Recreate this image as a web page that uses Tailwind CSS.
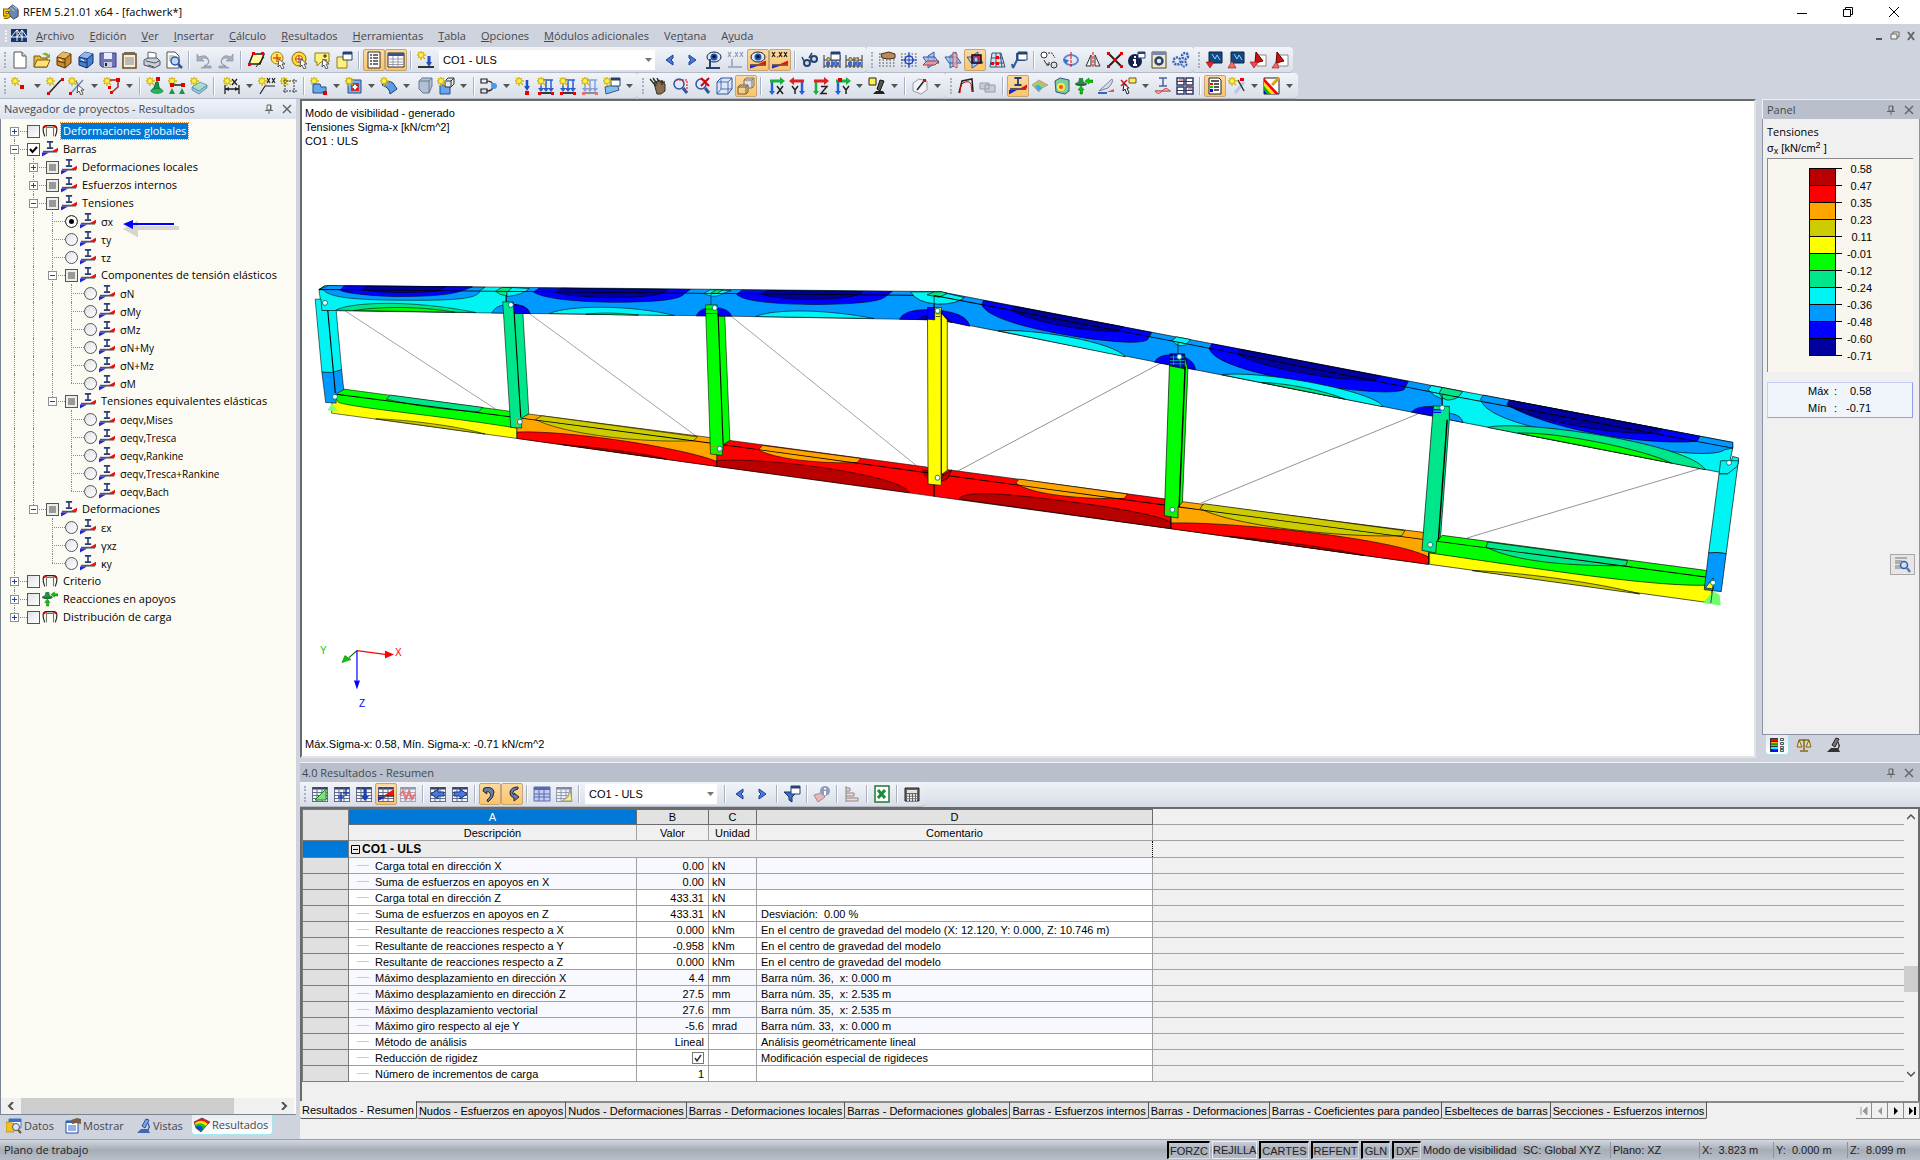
<!DOCTYPE html>
<html lang="es">
<head>
  <meta charset="UTF-8">
  <meta name="viewport" content="width=device-width, initial-scale=1.0">
  <title>RFEM 5.21.01 x64 - [fachwerk*]</title>
  <script src="https://cdn.jsdelivr.net/npm/@tailwindcss/browser@4"></script>
</head>
<body class="h-screen flex flex-col overflow-hidden bg-[#cfd3dd] font-['Open_Sans',sans-serif] text-[11px] leading-4 text-black">

  <!-- Title bar -->
  <header class="h-6 shrink-0 bg-white flex items-center justify-between">
    <div class="flex items-center gap-1 pl-[3px]">
      <svg class="w-4 h-4" viewBox="0 0 18 18"><path d="M6 5l5-4 6 5v8l-5 3-6-5z" fill="#6c86b0" stroke="#24344f"/><path d="M8 4l5 4M11 2l5 4" stroke="#c3d3ec"/><path d="M8 7H2v5h4q2 3-5 3" fill="none" stroke="#7a5a00" stroke-width="4"/><path d="M8 7H2v5h4q2 3-5 3" fill="none" stroke="#f5c400" stroke-width="2"/></svg>
      <h1>RFEM 5.21.01 x64 - [fachwerk*]</h1>
    </div>
    <div class="flex items-center gap-[34px] pr-5">
      <button aria-label="Minimizar"><svg class="w-3 h-3" viewBox="0 0 12 12"><path d="M1 7.500h10" stroke="#000"/></svg></button>
      <button aria-label="Restaurar"><svg class="w-3 h-3" viewBox="0 0 12 12"><path d="M1.500 3.500h7v7h-7zM3.500 3V1.500h7v7H9" fill="none" stroke="#000"/></svg></button>
      <button aria-label="Cerrar"><svg class="w-3 h-3" viewBox="0 0 12 12"><path d="M1 1l10 10M11 1L1 11" stroke="#000"/></svg></button>
    </div>
  </header>

  <!-- Menu -->
  <nav class="h-[23px] shrink-0 flex items-center justify-between text-[#44474f]">
    <div class="flex items-center gap-[15px] pl-[5px]">
      <span class="flex items-center gap-1">
        <span class="h-3 border-l-2 border-dotted border-[#f4f6fa]"></span>
        <svg class="w-4 h-4" viewBox="0 0 16 16"><path d="M0 1h16v13H0z" fill="#16376f"/><path d="M0 9h16M6 2v11M11 2v11M6 2L0 9M6 2l5 7M11 2L6 9M11 2l5 7" stroke="#fff" fill="none"/></svg>
      </span>
      <a href="#" class="-ml-1.5"><u>A</u>rchivo</a>
      <a href="#"><u>E</u>dición</a>
      <a href="#"><u>V</u>er</a>
      <a href="#"><u>I</u>nsertar</a>
      <a href="#"><u>C</u>álculo</a>
      <a href="#"><u>R</u>esultados</a>
      <a href="#"><u>H</u>erramientas</a>
      <a href="#"><u>T</u>abla</a>
      <a href="#"><u>O</u>pciones</a>
      <a href="#"><u>M</u>ódulos adicionales</a>
      <a href="#">Ve<u>n</u>tana</a>
      <a href="#">A<u>y</u>uda</a>
    </div>
    <div class="flex items-center gap-1.5 pr-1">
      <button aria-label="Minimizar documento"><svg class="w-2.5 h-2.5" viewBox="0 0 10 10"><path d="M2 8h6" stroke="#555" stroke-width="2"/></svg></button>
      <button aria-label="Restaurar documento"><svg class="w-2.5 h-2.5" viewBox="0 0 10 10"><path d="M3 3V1h6v5H7M1 3h6v5H1z" fill="#eee" stroke="#666"/></svg></button>
      <button aria-label="Cerrar documento"><svg class="w-2.5 h-2.5" viewBox="0 0 10 10"><path d="M2 1l6 8M8 1L2 9" stroke="#666" stroke-width="2"/></svg></button>
    </div>
  </nav>

  <!-- Toolbars -->
  <div id="toolbar1" class="h-[26px] shrink-0 flex"></div>
  <div id="toolbar2" class="h-[26px] shrink-0 flex"></div>

  <main class="flex-1 min-h-0 flex">

    <!-- Navigator -->
    <aside class="w-[296px] shrink-0 flex flex-col">
      <div class="h-5 shrink-0 flex items-center justify-between pl-1 pr-1 bg-linear-to-b from-[#f0f4fa] to-[#dbe1ec] text-[#44474f]">
        <h2>Navegador de proyectos - Resultados</h2>
        <span class="flex gap-2">
          <button aria-label="Fijar navegador"><svg class="w-2.5 h-2.5" viewBox="0 0 10 10"><path d="M3 1h4v5H3zM1 6.500h8M5 7v3M6.500 1v5" fill="none" stroke="#666"/></svg></button>
          <button aria-label="Cerrar navegador"><svg class="w-2.5 h-2.5" viewBox="0 0 10 10"><path d="M1 1l8 8M9 1L1 9" stroke="#666" stroke-width="1.500"/></svg></button>
        </span>
      </div>
      <div class="flex-1 min-h-0 relative flex flex-col bg-[#fcfbf3] border-l border-b border-[#7c8494] pt-[3px]">
        <ul id="tree"></ul>
        <svg class="absolute left-[122px] top-[99px] w-16 h-5" viewBox="0 0 64 20"><path d="M6 10h50M4 11l9-5v10z" stroke="#000" stroke-opacity=".15" stroke-width="4" fill="none"/><path d="M8 6h43" stroke="#0000ff" stroke-width="2"/><path d="M0 6l10-4v9z" fill="#0000ff"/></svg>
        <div class="mt-auto h-4 flex items-center bg-[#f0f0f0] mr-0.5">
          <button class="w-5 flex justify-center" aria-label="Desplazar a la izquierda"><svg class="w-2 h-2" viewBox="0 0 8 8"><path d="M6 0L2 4l4 4" fill="none" stroke="#505050" stroke-width="2"/></svg></button>
          <div class="flex-1 h-full flex"><div class="w-[84%] h-full bg-[#cdcdcd]"></div></div>
          <button class="w-5 flex justify-center" aria-label="Desplazar a la derecha"><svg class="w-2 h-2" viewBox="0 0 8 8"><path d="M2 0l4 4-4 4" fill="none" stroke="#505050" stroke-width="2"/></svg></button>
        </div>
      </div>
      <div class="h-6 shrink-0 flex items-start text-[#44474f]">
        <button class="flex items-center gap-0.5 h-[21px] pl-1.5 w-[59px]"><svg class="w-4 h-4 shrink-0" viewBox="0 0 16 16"><path d="M3 1h12v9H3z" fill="#fff" stroke="#3a6fd0"/><path d="M3 1h12v3H3z" fill="#3a6fd0"/><path d="M0 4h4l1 1h3v9H0z" fill="#f2c21a" stroke="#a07c00" stroke-width=".6"/><circle cx="10" cy="9" r="3.500" fill="#dbe9ff" stroke="#555"/><path d="M12 12l3 3" stroke="#7a4a20" stroke-width="2"/></svg>Datos</button>
        <button class="flex items-center gap-0.5 h-[21px] pl-1.5 w-[71px]"><svg class="w-4 h-4 shrink-0" viewBox="0 0 16 16"><path d="M1 3h12v12H1z" fill="#fff" stroke="#1d4ea8"/><path d="M1 3h12v2H1z" fill="#2b62c4"/><path d="M3 8h8M3 10h8M3 12h8" stroke="#2b62c4"/><path d="M6 2l6-2 4 1v5l-4-1-5 1z" fill="#7a5b45"/></svg>Mostrar</button>
        <button class="flex items-center gap-px h-[21px] pl-1.5 w-[61px]"><svg class="w-4 h-4 shrink-0" viewBox="0 0 16 16"><path d="M1 15h13l-2-4H5z" fill="#3f66b8"/><path d="M10 1l3 1-4 8-3-2zM12 5q3 4 0 7" fill="#7fa3e6" stroke="#274a96"/></svg>Vistas</button>
        <button class="flex items-center gap-0.5 h-5 pl-0.5 pr-1 bg-linear-to-b from-[#e8ecf2] to-white rounded-b border border-t-0 border-[#a9e6ee]"><svg class="w-4 h-4 shrink-0" viewBox="0 0 16 16"><path d="M0 5l8-4 8 4-4 4-5 6-5-4z" fill="#e11"/><path d="M1 6q7-5 13 1l-3 3-4 5-5-4z" fill="#fd0"/><path d="M1 8q6-4 11 1l-5 6-5-4z" fill="#1c1"/><path d="M2 10q4-3 7 1l-2 3-5-3z" fill="#14e"/><path d="M0 5l8-4 8 4-4 4-5 6-5-4z" fill="none" stroke="#333" stroke-width=".6"/></svg>Resultados</button>
      </div>
    </aside>

    <div class="flex-1 min-w-0 flex flex-col pl-1">
      <div class="flex-1 min-h-0 flex gap-1.5">

        <!-- Model view -->
        <section class="flex-1 min-w-0 relative overflow-hidden bg-white border-t-2 border-l-2 border-t-[#6b6b6b] border-l-[#6b6b6b] border-r-2 border-b-2 border-r-[#e3e3e3] border-b-[#e3e3e3] font-['Liberation_Sans',sans-serif]">
          <svg class="absolute inset-0 w-full h-full" viewBox="-1 0 1453 655" preserveAspectRatio="xMinYMin meet" stroke="#000" stroke-width=".7">
            <!-- left half -->
            <g transform="translate(-3 169) scale(.4209 .3333)" stroke-width="1.500">
              <g stroke="#777" stroke-width="1.800"><path d="M106 122L465 418M545 131L945 502M1025 139L1465 587"/></g>
              <!-- top chord -->
              <path d="M490 52L1508 65V150L980 138 490 130z" fill="#0099ff"/>
              <path d="M45 59L60 47 490 52V130L52 122z" fill="#00f4f4"/>
              <path d="M45 59L68 47 440 52 428 62C425 85 380 93 240 91 110 90 70 80 55 60z" fill="#0099ff"/>
              <path d="M95 61L105 48 410 51 385 63C350 78 290 80 230 80 160 78 110 70 95 61z" fill="#0000ff"/>
              <path d="M148 60L158 49 345 51 330 63C290 70 190 70 148 60z" fill="#0000a0"/>
              <path d="M85 121C120 97 260 88 418 128z" fill="#00e68a"/>
              <path d="M128 122C200 108 290 110 368 127z" fill="#00ff00"/>
              <path d="M465 64L480 53H510L495 66 490 78Q475 76 465 64z" fill="#00e68a"/>
              <path d="M492 78V66L505 53 545 56Q530 75 492 80z" fill="#00f4f4"/>
              <path d="M456 129Q465 108 487 105V130z" fill="#0099ff"/>
              <path d="M487 104Q540 98 547 131L487 130z" fill="#0000ff"/>
              <path d="M555 67L568 55 928 59 915 70C905 90 850 97 740 97 640 95 580 85 555 67z" fill="#0000ff"/>
              <path d="M608 67L622 55 874 59 862 70C830 83 760 83 720 83 660 80 625 75 608 67z" fill="#0000a0"/>
              <path d="M593 131C640 105 790 105 890 137z" fill="#00f4f4"/>
              <path d="M680 133C720 127 760 129 805 136z" fill="#00e68a"/>
              <path d="M960 71L975 60 1025 62Q1012 66 998 76 980 84 960 71z" fill="#00f4f4"/>
              <path d="M977 70L990 60H1005L992 71z" fill="#00e68a"/>
              <path d="M942 138Q950 112 985 112 1020 115 1026 139z" fill="#0000ff"/>
              <path d="M1038 73L1050 61 1408 65 1395 77C1385 95 1330 103 1220 104 1100 102 1050 90 1038 73z" fill="#0000ff"/>
              <path d="M1098 73L1112 62 1338 65 1325 76C1290 87 1240 88 1190 88 1140 85 1110 80 1098 73z" fill="#0000a0"/>
              <path d="M1083 140C1130 116 1250 118 1365 146z" fill="#00f4f4"/>
              <path d="M45 59L1508 77" stroke-width="2.600"/>
              <path d="M490 78V130M977 72V138M60 47L45 59"/>
              <!-- bottom chord -->
              <path d="M77 372L515 440 516 506 75 430z" fill="#ffff00"/>
              <path d="M180 447C260 450 380 470 440 493z" fill="#cccc00"/>
              <path d="M77 372L104 358 502 425 515 445V475C350 440 130 415 92 398z" fill="#00ff00"/>
              <path d="M215 376L435 413 425 425 400 424C330 418 260 405 205 388z" fill="#00e68a"/>
              <path d="M527 440L545 433 985 505 992 525 991 590 516 506V445z" fill="#ffa500"/>
              <path d="M516 487C620 480 900 530 991 575V590L516 506z" fill="#ff0000"/>
              <path d="M620 524C700 532 820 550 870 568z" fill="#c00000"/>
              <path d="M575 438L945 501 935 513C800 520 620 490 560 449z" fill="#cccc00"/>
              <path d="M991 525L1022 512 1490 592 1508 610V680L991 590z" fill="#ff0000"/>
              <path d="M991 573C1100 560 1430 615 1449 669L991 590z" fill="#b80000"/>
              <path d="M1100 527L1333 566 1325 578C1250 583 1130 570 1090 540z" fill="#ffa500"/>
              <path d="M1480 600Q1485 630 1508 635V608z" fill="#c00000"/>
              <path d="M77 372L525 445 1006 525 1508 612" fill="none" stroke-width="2.600"/>
              <!-- posts -->
              <path d="M36 88H50L52 122H86L99 300 75 310 52 307z" fill="#00f4f4"/>
              <path d="M52 307Q75 312 99 300L104 360 86 372V400L61 398z" fill="#0099ff"/>
              <path d="M66 122L84 370" stroke-width="2.600"/>
              <path d="M75 402L65 422 90 424z" fill="#80ff80" stroke="none"/>
              <path d="M482 96H506L510 131 530 131 544 432 527 445V475L501 473z" fill="#00e68a"/>
              <path d="M506 96L510 131 547 131Q540 106 506 104z" fill="#0000ff"/>
              <path d="M509 125L525 445" stroke-width="2.600"/>
              <path d="M515 445V470M527 450L515 474" stroke="#ffa500"/>
              <path d="M964 105H992L994 140H1010L1022 512 1006 525 1004 557 976 553z" fill="#00ff00"/>
              <path d="M994 130L1006 525" stroke-width="2.600"/>
              <path d="M964 118H992M964 131H992" stroke="#0000a0"/>
              <path d="M977 530H1004M977 540H1004M977 550H1004" stroke="#ff7000"/>
            </g>
            <!-- right half -->
            <g transform="translate(597 169) scale(.5485 .3333)" stroke-width="1.500">
              <g stroke="#777" stroke-width="1.800"><path d="M105 605L480 277M550 700L945 433M1035 805L1470 592"/></g>
              <!-- top chord -->
              <path d="M63 66H75L510 203 990 353V445L540 300 75 150H63z" fill="#0099ff"/>
              <path d="M990 353L1520 518V535L1510 612 1028 458 990 445z" fill="#00f4f4"/>
              <path d="M20 66H75L118 83Q105 103 70 103 30 98 20 66z" fill="#00f4f4"/>
              <path d="M50 75L63 66H78L87 71 72 82z" fill="#00e68a"/>
              <path d="M0 148Q8 120 50 119 122 123 128 169L75 150z" fill="#0000ff"/>
              <path d="M35 149Q45 132 63 133 88 135 95 158L75 150z" fill="#0000a0"/>
              <path d="M150 105L153 92 460 188 452 210C440 222 400 218 340 205 240 180 160 145 150 105z" fill="#0000ff"/>
              <path d="M205 122L210 110 408 171 398 184C340 187 240 155 205 122z" fill="#0000a0"/>
              <path d="M180 183C240 175 390 215 412 261z" fill="#00f4f4"/>
              <path d="M497 212L505 201 531 209 522 225Q508 235 497 212z" fill="#00f4f4"/>
              <path d="M465 277Q472 255 495 255L520 262Q538 275 540 300z" fill="#0000ff"/>
              <path d="M565 235L570 222 928 335 920 360C900 372 850 365 800 355 680 325 572 285 565 235z" fill="#0000ff"/>
              <path d="M615 252L622 239 877 319 868 331C800 335 660 295 615 252z" fill="#0000a0"/>
              <path d="M588 315C660 300 870 365 882 411z" fill="#00f4f4"/>
              <path d="M660 338C710 340 780 365 812 388z" fill="#00e68a"/>
              <path d="M964 360L970 347 990 353V388Q975 380 964 360z" fill="#00f4f4"/>
              <path d="M985 368L990 353 1027 365Q1020 390 1000 391 985 385 985 368z" fill="#00e68a"/>
              <path d="M934 427Q942 408 975 410L980 440z" fill="#0000ff"/>
              <path d="M1003 430Q1025 436 1028 458L1003 450z" fill="#0099ff"/>
              <path d="M1060 388L1065 376 1520 518V535L1505 540C1490 560 1420 550 1360 535 1230 500 1070 460 1060 388z" fill="#0099ff"/>
              <path d="M1108 405L1112 391 1460 500 1455 515C1350 528 1180 475 1108 405z" fill="#0000ff"/>
              <path d="M1110 405L1115 392 1390 478 1382 491C1300 495 1160 455 1110 405z" fill="#0000a0"/>
              <path d="M1073 473C1130 448 1440 520 1470 600z" fill="#00e68a"/>
              <path d="M1128 490C1200 485 1360 540 1408 580z" fill="#00ff00"/>
              <path d="M63 77L508 217 990 373 1520 535" fill="none" stroke-width="2.600"/>
              <path d="M63 77V150M508 217V255M990 373V410"/>
              <!-- bottom chord -->
              <path d="M63 610L88 600 486 688 495 710V777L63 680z" fill="#ff0000"/>
              <path d="M108 688C120 660 200 672 320 698 420 720 490 745 495 760V777z" fill="#b80000"/>
              <path d="M218 628L416 673 410 686C340 690 240 676 212 640z" fill="#ffa500"/>
              <path d="M495 700L516 696 955 788 965 805V884L495 777z" fill="#ffa500"/>
              <path d="M495 760C600 755 900 805 965 862V884L495 777z" fill="#ff0000"/>
              <path d="M600 800C680 810 800 838 850 858z" fill="#c00000"/>
              <path d="M555 702L922 783 916 798C800 805 600 765 548 716z" fill="#cccc00"/>
              <path d="M967 825L1484 925 1480 1000 967 884z" fill="#ffff00"/>
              <path d="M1045 903C1120 905 1280 940 1350 973z" fill="#cccc00"/>
              <path d="M980 815L990 797 1470 902 1484 925 1470 947C1350 950 1100 880 967 850z" fill="#00ff00"/>
              <path d="M1073 817L1328 873 1325 888C1220 890 1120 875 1070 832z" fill="#00e68a"/>
              <path d="M63 612L510 712 982 815 1484 925" fill="none" stroke-width="2.600"/>
              <path d="M80 615L95 601 88 625Q80 635 75 634z" fill="#c00000"/>
              <path d="M63 645V680M495 745V777M965 850V884"/>
              <!-- posts -->
              <path d="M51 148L64 113H76V130L87 150V602L76 615V647L52 643z" fill="#ffff00"/>
              <path d="M51 113H64V150L51 148z" fill="#0000ff"/>
              <path d="M76 125V615" stroke-width="2"/>
              <path d="M66 125h8M66 132h8M66 140h8"/>
              <path d="M493 255L520 258 526 297 516 697 508 712V745L483 738z" fill="#00ff00"/>
              <path d="M493 252H520V297L493 288z" fill="#0000c0"/>
              <path d="M493 262H520M493 272H520M493 282H520M500 255v30M512 262v30" stroke="#00e68a"/>
              <path d="M521 290L510 712" stroke-width="2.600"/>
              <path d="M485 722h22M485 732h22" stroke="#ff7000"/>
              <path d="M974 408L1003 410V450L987 800 980 815 978 850 953 842z" fill="#00e68a"/>
              <path d="M974 420h14M974 428h14" stroke="#0000ff" stroke-width="4"/>
              <path d="M999 450L983 812" stroke-width="2.600"/>
              <path d="M958 825h15M958 833h15" stroke="#00ff00"/>
              <path d="M1520 560L1531 565 1508 852Q1490 846 1476 850L1495 612 1510 612z" fill="#00f4f4"/>
              <path d="M1498 573H1531L1528 590 1511 612H1495z" fill="#00f4f4"/>
              <path d="M1476 850Q1490 846 1508 852L1499 966 1468 960z" fill="#0099ff"/>
              <path d="M1470 955L1484 925V958z" fill="#ffff00"/>
              <path d="M1484 965L1466 1000 1498 1008 1496 975z" fill="#6dff6d" stroke="none"/>
              <path d="M1484 950L1480 1000"/>
            </g>
            <g fill="#fff" stroke="#088" stroke-width="1">
              <circle cx="22" cy="202" r="2.500"/><circle cx="208" cy="204" r="2.500"/><circle cx="412" cy="207" r="2.500"/><circle cx="635" cy="210" r="2.500"/>
              <circle cx="32" cy="296" r="2.500"/><circle cx="217" cy="321" r="2.500"/><circle cx="417" cy="348" r="2.500"/><circle cx="635" cy="377" r="2.500"/>
              <circle cx="877" cy="256" r="2.500"/><circle cx="1140" cy="307" r="2.500"/><circle cx="1427" cy="362" r="2.500"/>
              <circle cx="870" cy="409" r="2.500"/><circle cx="1128" cy="444" r="2.500"/><circle cx="1411" cy="482" r="2.500"/>
            </g>
            <!-- axes -->
            <g stroke-width="1.200" font-size="10">
              <path d="M54 550L84 554" stroke="#f00"/><path d="M82 550l9 4-9 4z" fill="#f00" stroke="none"/>
              <path d="M54 550L46 557" stroke="#060"/><path d="M39 562l3-7 6 4z" fill="#0c0" stroke="#060" stroke-width=".5"/>
              <path d="M54 550V580" stroke="#00f"/><path d="M51 580h6l-3 9z" fill="#00f" stroke="none"/>
              <text x="17" y="553" fill="#0c0" stroke="none">Y</text>
              <text x="92" y="555" fill="#f00" stroke="none">X</text>
              <text x="56" y="606" fill="#00f" stroke="none">Z</text>
            </g>
          </svg>
          <div class="absolute left-[3px] top-[5px] leading-[14px]">
            <p>Modo de visibilidad - generado</p>
            <p>Tensiones Sigma-x [kN/cm^2]</p>
            <p>CO1 : ULS</p>
          </div>
          <p class="absolute left-[3px] bottom-[5px] leading-[14px]">Máx.Sigma-x: 0.58, Mín. Sigma-x: -0.71 kN/cm^2</p>
        </section>

        <!-- Colour panel -->
        <aside class="w-[158px] shrink-0 flex flex-col">
          <div class="h-5 shrink-0 flex items-center justify-between pl-1 pr-1.5 bg-[#b9c0cb] border-t border-l border-[#eef1f6] text-[#44474f]">
            <h2>Panel</h2>
            <span class="flex gap-2">
              <button aria-label="Fijar panel"><svg class="w-2.5 h-2.5" viewBox="0 0 10 10"><path d="M3 1h4v5H3zM1 6.500h8M5 7v3M6.500 1v5" fill="none" stroke="#666"/></svg></button>
              <button aria-label="Cerrar panel"><svg class="w-2.5 h-2.5" viewBox="0 0 10 10"><path d="M1 1l8 8M9 1L1 9" stroke="#666" stroke-width="1.500"/></svg></button>
            </span>
          </div>
          <div class="flex-1 min-h-0 bg-[#f0f0f0] border-x border-b border-[#8b93a3] pt-[5px] pl-1 pr-1.5 font-['Liberation_Sans',sans-serif]">
            <p class="font-['Open_Sans',sans-serif]">Tensiones</p>
            <p>σ<sub class="text-[9px]">x</sub> [kN/cm<sup class="text-[9px]">2</sup> ]</p>
            <div class="mt-0.5 h-[214px] bg-[#f9f6ef] border-t border-l border-[#8a8a8a] flex justify-center pt-0.5">
              <div class="w-[33px] pt-[7px]">
                <div id="legendColours" class="border border-b-0 border-black w-[27px]"></div>
              </div>
              <div id="legendValues" class="w-[30px] text-right"></div>
            </div>
            <div class="mt-2.5 h-9 bg-[#eff5fb] border border-[#c3cdf5] border-b-[#9a9ae0] border-r-[#9a9ae0] leading-[17px] pl-10">
              <p class="flex"><span class="w-[26px]">Máx</span><span class="w-4">:</span><span>0.58</span></p>
              <p class="flex"><span class="w-[26px]">Mín</span><span class="w-3">:</span><span>-0.71</span></p>
            </div>
            <div class="mt-[136px] flex justify-end -mr-0.5">
              <button class="w-[25px] h-[21px] bg-[#e6e6e6] border border-[#a8a8a8] flex items-center justify-center" aria-label="Detalles"><svg class="w-4 h-4" viewBox="0 0 16 16"><path d="M0 1h12M0 4h7M0 6h5M0 9h5M0 11h7" stroke="#777"/><circle cx="9" cy="8" r="3.500" fill="#cfe0ff" stroke="#335a9c" stroke-width="1.500"/><path d="M12 11l3 4" stroke="#5578c0" stroke-width="2.500"/></svg></button>
            </div>
          </div>
          <div class="h-[23px] shrink-0 flex items-start pl-[3px]">
            <button class="w-6 h-5 rounded-b border border-t-0 border-[#a9e6ee] bg-linear-to-b from-[#e4e8f0] to-white flex items-center justify-center" aria-label="Escala de colores"><svg class="w-4 h-4" viewBox="0 0 16 16"><path d="M1 1h8v14H1z" fill="#333"/><path d="M2 2h7v2H2z" fill="#f00"/><path d="M2 5h7v1.500H2z" fill="#fa0"/><path d="M2 7.500h7V9H2z" fill="#0f0"/><path d="M2 10h7v2H2z" fill="#0ff"/><path d="M2 13h7v1.500H2z" fill="#00f"/><path d="M11.500 1.500h3v2h-3zM11.500 5.500h3v2h-3zM11.500 9.500h3v2h-3zM11.500 12.500h3v2h-3z" fill="#ddd" stroke="#555"/></svg></button>
            <button class="w-[30px] h-5 flex items-center justify-center" aria-label="Factores"><svg class="w-4 h-4" viewBox="0 0 16 16"><path d="M8 2v11M3 3h10M4 14h8" stroke="#8a6a10" stroke-width="1.500"/><path d="M3 3L1 10h5zM13 3l-3 7h5z" fill="#f5e08a" stroke="#7c6420"/></svg></button>
            <button class="w-[30px] h-5 flex items-center justify-center" aria-label="Filtro"><svg class="w-4 h-4" viewBox="0 0 16 16"><path d="M1 15h13l-2-4H5z" fill="#333"/><path d="M10 1l3 1-4 8-3-2zM12 5q3 4 0 7" fill="#777" stroke="#222"/></svg></button>
          </div>
        </aside>
      </div>

      <!-- Results table -->
      <section class="shrink-0 mt-1 flex flex-col bg-[#f0f0f0]">
        <div class="h-5 flex items-center justify-between pl-0.5 pr-1.5 bg-[#b9c0cb] border-t border-[#eef1f6] text-[#44474f]">
          <h2>4.0 Resultados - Resumen</h2>
          <span class="flex gap-2">
            <button aria-label="Fijar tabla"><svg class="w-2.5 h-2.5" viewBox="0 0 10 10"><path d="M3 1h4v5H3zM1 6.500h8M5 7v3M6.500 1v5" fill="none" stroke="#666"/></svg></button>
            <button aria-label="Cerrar tabla"><svg class="w-2.5 h-2.5" viewBox="0 0 10 10"><path d="M1 1l8 8M9 1L1 9" stroke="#666" stroke-width="1.500"/></svg></button>
          </span>
        </div>
        <div id="toolbar3" class="h-[25px] flex bg-linear-to-b from-[#eef2f8] to-[#d5dbe6]"></div>
        <div class="flex border-t-2 border-x-2 border-[#6b6b6b] font-['Liberation_Sans',sans-serif] leading-[14px] pb-[19px]">
          <table class="flex-1 table-fixed border-collapse">
            <colgroup>
              <col class="w-[46px]"><col class="w-[288px]"><col class="w-[72px]"><col class="w-12"><col class="w-[396px]"><col>
            </colgroup>
            <thead>
              <tr class="h-[15px]">
                <th rowspan="2" class="border border-[#7a7a7a] bg-[#e2e2e2]"></th>
                <th class="border border-[#6b6b6b] p-0 font-normal bg-[#0078d7] text-white">A</th>
                <th class="border border-[#6b6b6b] p-0 font-normal bg-[#e2e2e2]">B</th>
                <th class="border border-[#6b6b6b] p-0 font-normal bg-[#e2e2e2]">C</th>
                <th class="border border-[#6b6b6b] p-0 font-normal bg-[#e2e2e2]">D</th>
                <td class="border-b border-[#a0a0a0]"></td>
              </tr>
              <tr class="h-4">
                <th class="border border-[#a0a0a0] p-0 font-normal">Descripción</th>
                <th class="border border-[#a0a0a0] p-0 font-normal">Valor</th>
                <th class="border border-[#a0a0a0] p-0 font-normal">Unidad</th>
                <th class="border border-[#a0a0a0] p-0 font-normal">Comentario</th>
                <td class="border-b border-[#a0a0a0]"></td>
              </tr>
              <tr class="h-[17px]">
                <td class="border border-[#7a7a7a] bg-[#0078d7]"></td>
                <th colspan="4" class="border border-dotted border-black p-0 bg-[#ececec] text-left font-bold text-[12px]">
                  <span class="flex items-center gap-0.5 pl-0.5"><svg class="w-[9px] h-[9px]" viewBox="0 0 9 9"><path d="M.5.5h8v8h-8zM2 4.500h5" fill="none" stroke="#000"/></svg>CO1 - ULS</span>
                </th>
                <td class="border-b border-[#a0a0a0]"></td>
              </tr>
            </thead>
            <tbody id="rows"></tbody>
          </table>
          <div class="w-3.5 shrink-0 flex flex-col items-center justify-between py-1">
            <button aria-label="Subir"><svg class="w-2 h-2" viewBox="0 0 8 8"><path d="M0 6l4-4 4 4" fill="none" stroke="#505050" stroke-width="1.500"/></svg></button>
            <div class="w-full flex-1 flex flex-col justify-end pb-[78px]"><div class="h-[26px] bg-[#cdcdcd]"></div></div>
            <button aria-label="Bajar"><svg class="w-2 h-2" viewBox="0 0 8 8"><path d="M0 2l4 4 4-4" fill="none" stroke="#505050" stroke-width="1.500"/></svg></button>
          </div>
        </div>
        <div class="h-[18px] flex font-['Liberation_Sans',sans-serif]">
          <div id="tabs" class="flex"></div>
          <div class="flex-1 flex justify-end border-t-2 border-[#8a8a8a]">
            <button class="w-4 h-4 bg-[#f0f0f0] border-r border-b border-[#8a8a8a] flex items-center justify-center" aria-label="Primera"><svg class="w-2 h-2" viewBox="0 0 8 8"><path d="M1 0v8M7 0L3 4l4 4z" fill="#999" stroke="#999"/></svg></button>
            <button class="w-4 h-4 bg-[#f0f0f0] border-r border-b border-[#8a8a8a] flex items-center justify-center" aria-label="Anterior"><svg class="w-2 h-2" viewBox="0 0 8 8"><path d="M6 0L2 4l4 4z" fill="#999"/></svg></button>
            <button class="w-4 h-4 bg-[#f0f0f0] border-r border-b border-[#8a8a8a] flex items-center justify-center" aria-label="Siguiente"><svg class="w-2 h-2" viewBox="0 0 8 8"><path d="M2 0l4 4-4 4z"/></svg></button>
            <button class="w-4 h-4 bg-[#f0f0f0] border-r border-b border-[#8a8a8a] flex items-center justify-center" aria-label="Última"><svg class="w-2 h-2" viewBox="0 0 8 8"><path d="M1 0l4 4-4 4zM6 0h2v8H6z"/></svg></button>
          </div>
        </div>
        <div class="h-5"></div>
      </section>
    </div>
  </main>

  <!-- Status bar -->
  <footer class="h-[21px] shrink-0 flex items-center justify-between bg-linear-to-b from-[#d3d7df] via-[#a6adb7] to-[#b9bfc8] border-t border-[#9a9fa8] pl-1 text-[#222] font-['Liberation_Sans',sans-serif]">
    <span class="font-['Open_Sans',sans-serif]">Plano de trabajo</span>
    <div class="flex items-center">
      <div class="flex gap-0.5 leading-3 mr-0.5">
        <button class="h-[18px] w-[43px] border-t-2 border-l-2 border-black border-r border-b border-r-[#d8dce2] border-b-[#d8dce2]">FORZC</button>
        <button class="h-[18px] w-[45px] border border-[#e8ebf0]">REJILLA</button>
        <button class="h-[18px] w-[50px] border-t-2 border-l-2 border-black border-r border-b border-r-[#d8dce2] border-b-[#d8dce2]">CARTES</button>
        <button class="h-[18px] w-[48px] border-t-2 border-l-2 border-black border-r border-b border-r-[#d8dce2] border-b-[#d8dce2]">REFENT</button>
        <button class="h-[18px] w-[29px] border-t-2 border-l-2 border-black border-r border-b border-r-[#d8dce2] border-b-[#d8dce2]">GLN</button>
        <button class="h-[18px] w-[29px] border-t-2 border-l-2 border-black border-r border-b border-r-[#d8dce2] border-b-[#d8dce2]">DXF</button>
      </div>
      <span class="w-[100px]">Modo de visibilidad</span>
      <span class="w-[87px]">SC: Global XYZ</span>
      <span class="w-[89px] border-l border-[#8d939d] pl-0.5">Plano: XZ</span>
      <span class="w-[74px] border-l border-[#8d939d] pl-0.5 whitespace-pre">X:  3.823 m</span>
      <span class="w-[74px] border-l border-[#8d939d] pl-0.5 whitespace-pre">Y:  0.000 m</span>
      <span class="w-[73px] border-l border-[#8d939d] pl-0.5 whitespace-pre">Z:  8.099 m</span>
    </div>
  </footer>

  <script>
    // shared icon parts, 18x18 grid
    const star = '<path d="M4 0v9M0 4h9M1 1l7 7M7 1L1 7" stroke="#d8b800" stroke-width="1.500"/><circle cx="4" cy="4" r="2.500" fill="#fff04a" stroke="#b89a00" stroke-width=".5"/>';
    const red = (x, y) => `<rect x="${x}" y="${y}" width="4" height="4" fill="#e00000"/>`;
    const cursor = '<path d="M10 8l6 5h-3l2 4-2 1-2-4-2 2z" fill="#fff" stroke="#333" stroke-width=".8"/>';
    const win = '<path d="M8 1h9v8H8z" fill="#fff" stroke="#26426f"/><path d="M8 1h9v2.500H8z" fill="#26426f"/>';
    const eye = '<ellipse cx="9" cy="6" rx="7" ry="5" fill="#dbe9ff" stroke="#123"/><circle cx="9" cy="6" r="3.500" fill="#2350a8"/><circle cx="9" cy="5.500" r="1.500" fill="#012"/>';
    const wedge = '<path d="M1 14h16" stroke="#444" stroke-width="1.500"/><path d="M1 17.500V14.500h9z" fill="#2222e0"/><path d="M17 13.500V9.500l-9 4z" fill="#e11"/>';
    const beads = '<path d="M1 4v13M17 4v13M1 9h16M1 15h16M5 6v11M9 6v11M13 6v11" stroke="#333"/><path d="M3 11h4v3H3zM8 11h4v3H8zM13 11h3v3h-3z" fill="#3f66c8"/><path d="M4 7h3v3H4zM10 7h3v3h-3z" fill="#f3d34a" stroke="#765"/>';
    const dots = '<path d="M1 3h16M1 6h16M1 9h16M1 12h16M1 15h16" stroke="#444" stroke-dasharray="1.500 2"/>';
    const planes = '<path d="M6 5l6-4v12l-6 4z" fill="#a9c8f4" stroke="#2b5ca8"/><path d="M1 6h12l4 6H5z" fill="#8fb8ee" fill-opacity=".6" stroke="#2b5ca8"/>';
    const axis = (a, b, t) => `<path d="M5 4v12" stroke="${b}" stroke-width="2.500"/><path d="M2 14h6l-3 4z" fill="${b}"/><path d="M3 4h11" stroke="${a}" stroke-width="3"/><path d="M13 0l5 4-5 4z" fill="${a}"/>${t}`;
    const tX = '<path d="M10 9l6 8M16 9l-6 8" stroke="#222" stroke-width="1.500"/>';
    const tY = '<path d="M10 9l3 4 3-4M13 13v4" fill="none" stroke="#222" stroke-width="1.500"/>';
    const tZ = '<path d="M10 9.500h6l-6 7h6" fill="none" stroke="#222" stroke-width="1.500"/>';
    const lens = '<circle cx="8" cy="7" r="5" fill="#dfeaff" stroke="#31569c" stroke-width="1.500"/><path d="M12 11l4 5" stroke="#31569c" stroke-width="3"/>';
    const sheet = '<path d="M1 1.500h16v15H1z" fill="#f4f5fa"/><path d="M1 2h16v2.500H1z" fill="#3a4468"/><path d="M1 7.500h16M1 10.500h16M1 13.500h16M1 16.500h16M1.500 2v15M6 2v15M11 2v15M16.500 2v15" stroke="#55607c" stroke-width=".9"/>';
    const loads = '<path d="M3 3h13M4 3v9M9 3v9M14 3v9" stroke="#2b5cd0" stroke-width="1.500"/><path d="M1 11h6l-3 4zM6 11h6l-3 4zM11 11h6l-3 4z" fill="#2b5cd0"/><path d="M1 16h16" stroke="#000" stroke-width="1.500"/><path d="M1 15h3v3H1zM14 15h3v3h-3z" fill="#e00"/>';
    const xxx = (c) => `<path d="M1 1l3 5M4 1L1 6M6 6h1M8 1l3 5M11 1L8 6M13 1l3 5M16 1l-3 5" stroke="${c}" stroke-width="1.200"/>`;

    const icons = {
      nuevo: '<path d="M3 1h8l4 4v12H3z" fill="#fff" stroke="#555"/><path d="M11 1v4h4" fill="#ddd" stroke="#555"/>',
      abrir: '<path d="M1 5h6l1 2h6v9H1z" fill="#e8b63a" stroke="#7a5a10"/><path d="M4 9h13l-3 7H1z" fill="#ffe27a" stroke="#7a5a10"/><path d="M9 3q4-3 7 1l1-2v5h-5l2-2" fill="#8fa832"/>',
      cajaMarron: '<path d="M2 6l6-5 8 2v9l-6 5-8-3z" fill="#c98a2e" stroke="#5a3508"/><path d="M2 6l6-5 8 2-6 5z" fill="#e8b562"/><path d="M2 6l8 2 6-5M10 8v9M2 10l8 2" stroke="#5a3508" fill="none"/><path d="M4 8l3 1v1L4 9z" fill="#fff"/>',
      cajaAzul: '<path d="M2 6l6-5 8 2v9l-6 5-8-3z" fill="#4a7ed0" stroke="#10306a"/><path d="M2 6l6-5 8 2-6 5z" fill="#8fb4f0"/><path d="M2 6l8 2 6-5M10 8v9M2 10l8 2" stroke="#10306a" fill="none"/><path d="M4 8l3 1v1L4 9z" fill="#fff"/>',
      guardar: '<path d="M1 2h16v14H3l-2-2z" fill="#6f74b8" stroke="#3b3f7a"/><path d="M5 2h8v6H5z" fill="#e8ecff"/><path d="M5 11h8v5H5z" fill="#c9cde0"/><path d="M6 12h2v3H6z" fill="#223"/>',
      portapapeles: '<path d="M2 3h13v14H2z" fill="#f4efdc" stroke="#6b4a1e" stroke-width="1.500"/><path d="M3 1h11v3H3z" fill="#7a6a50"/><path d="M4 7h9M4 9h9M4 11h9M4 13h9" stroke="#888"/>',
      imprimir: '<path d="M5 8V1l8 1v6" fill="#fff" stroke="#666"/><path d="M1 9l4-2h9l3 3v4l-6 3-10-3z" fill="#c9d0dc" stroke="#4a5060"/><path d="M3 10l9 2 4-2M5 14l6 2" stroke="#555" fill="none"/>',
      vista: '<path d="M2 1h8l4 4v12H2z" fill="#fff" stroke="#555"/><path d="M4 5h5M4 7h7M4 9h4" stroke="#999"/><circle cx="10" cy="10" r="4" fill="#bcd7ff" stroke="#31569c" stroke-width="1.500"/><path d="M13 13l4 4" stroke="#31569c" stroke-width="2.500"/>',
      deshacer: '<path d="M2 3v7h7L6 8q6-3 8 3-1 3-5 4h7v2H6q7-2 8-7-2-8-10-4z" fill="#a7b2c4" stroke="#7d8798" stroke-width=".6"/>',
      rehacer: '<g transform="matrix(-1 0 0 1 18 0)"><path d="M2 3v7h7L6 8q6-3 8 3-1 3-5 4h7v2H6q7-2 8-7-2-8-10-4z" fill="#a7b2c4" stroke="#7d8798" stroke-width=".6"/></g>',
      selPlano: '<path d="M6 3h11l-4 10H2z" fill="#fff9a0" stroke="#222" stroke-width="1.500"/><path d="M5 1h3v3H5zM1 12h3v3H1zM14 1h3v3h-3z" fill="#e00"/><path d="M9 16l8-10" stroke="#222"/>',
      selCirculo: '<circle cx="8" cy="7" r="6" fill="#ffe95c" stroke="#a08000"/><path d="M8 3v8M4 7h8" stroke="#e00"/>' + cursor,
      selAnillo: '<circle cx="8" cy="8" r="7" fill="#ffe02e" stroke="#8a6c00"/><circle cx="8" cy="8" r="3.500" fill="#fff" stroke="#8a6c00"/><path d="M8 5v6M5 8h6" stroke="#e00"/>' + cursor,
      selEspecial: '<path d="M2 2h14v9H8l-4 4v-4H2z" fill="#fff27a" stroke="#8a7c20"/><path d="M12 3v4M10 5h4M10 9h4" stroke="#222"/>' + cursor,
      selVentana: '<path d="M2 6h10v11H2z" fill="#fff27a" stroke="#8a7c20"/>' + win,
      lista: '<path d="M3 1h12v16H3z" fill="#fff" stroke="#333"/><path d="M5 4h2M8 4h5M5 7h2M8 7h5M5 10h2M8 10h5M5 13h2M8 13h5" stroke="#444" stroke-width="1.500"/>',
      tabla: '<path d="M1 2h16v14H1z" fill="#fff" stroke="#333"/><path d="M1 2h16v3H1z" fill="#31569c"/><path d="M6 5v11M11 5v11M1 8h16M1 11h16M1 13.500h16" stroke="#99a"/>',
      nuevaCarga: star + '<path d="M12 5v8" stroke="#2350c0" stroke-width="3"/><path d="M9 11h6l-3 5z" fill="#2350c0"/><path d="M1 16h16" stroke="#333" stroke-width="2"/>',
      atras: '<path d="M12 4L5 9l7 5V11l-2-2 2-2z" fill="#4a78e0" stroke="#1c3f98"/>',
      adelante: '<path d="M6 4l7 5-7 5V11l2-2-2-2z" fill="#4a78e0" stroke="#1c3f98"/>',
      ojoCarga: eye + '<path d="M5 8v9M1 17h14" stroke="#26426f" stroke-width="2"/>',
      xxxGris: xxx('#9a9fb0') + '<path d="M5 8v7M1 16h14" stroke="#a7aec2" stroke-width="2"/>',
      ojo: eye + wedge,
      xxx: xxx('#222') + wedge,
      gafas: '<path d="M1 6l3 6M8 7l3-5" stroke="#26426f" stroke-width="1.500"/><circle cx="6" cy="12" r="3" fill="#cfdcf4" stroke="#26426f" stroke-width="2"/><circle cx="13" cy="8" r="3" fill="#cfdcf4" stroke="#26426f" stroke-width="2"/>',
      abacoVentana: beads + win,
      abaco: beads,
      mano: dots + '<path d="M3 3l8-2 6 2v4l-6 1-7-1z" fill="#b98a62" stroke="#4a3018"/>',
      snap: dots + '<circle cx="9" cy="9" r="4" fill="#dfe9ff" stroke="#1c3fb8" stroke-width="1.500"/><path d="M9 1v16M1 9h16" stroke="#1c3fb8"/>',
      plano1: planes + '<path d="M1 14l4-4h12l-4 4z" fill="#f9a0a0" fill-opacity=".8" stroke="#b33"/>',
      plano2: planes + '<path d="M9 1l4 2v14l-4-2z" fill="#f9c0c0" fill-opacity=".6" stroke="#b55"/>',
      plano3: planes + '<path d="M6 4h9v8H6z" fill="#f22" stroke="#111" stroke-width="1.500"/><path d="M8 6h4v5H8z" fill="#a9c8f4" stroke="#1c3fb8"/>',
      malla: '<path d="M4 2h9l4 14H2z" fill="#cfe2fa" stroke="#357"/><path d="M8 2v14M12 2l2 14M3 7h12M3 12h13" stroke="#357"/><path d="M3 11h3v3H3zM8 11h3v3H8zM8 5h3v3H8z" fill="#e00"/>',
      ejes: '<path d="M3 17l4-8V2M7 9h8M3 17l-1-4" stroke="#31569c" stroke-width="2" fill="none"/>' + win,
      mover: '<circle cx="4" cy="4" r="3" fill="#fff" stroke="#333"/><circle cx="14" cy="14" r="3" fill="#ddd" stroke="#333"/><path d="M8 2h4l3 5" stroke="#333" stroke-dasharray="2 1"/><path d="M4 9q1 4 5 5M9 11v3H6" stroke="#333"/>',
      rotar: '<ellipse cx="9" cy="9" rx="7" ry="5" fill="none" stroke="#5a86d8" stroke-width="2"/><path d="M1 8l3 5 3-4z" fill="#3c6cc8"/><path d="M9 1v16" stroke="#e00" stroke-dasharray="3 1"/>',
      espejo: '<path d="M7 4v11H2zM11 4v11h5z" fill="#eee" stroke="#333"/><path d="M9 1v16" stroke="#e00" stroke-dasharray="3 1"/>',
      cruz: '<path d="M3 3l12 12M15 3L3 15" stroke="#222" stroke-width="2"/><path d="M1 1h3v3H1zM14 1h3v3h-3zM1 14h3v3H1zM14 14h3v3h-3z" fill="#e00"/><circle cx="9" cy="9" r="2" fill="#e00"/>',
      info: '<circle cx="7" cy="10" r="7" fill="#14204a"/><path d="M7 5v2M5 9h2v5M5 14h4" stroke="#fff" stroke-width="2" fill="none"/><path d="M10 1h7v6h-7z" fill="#fff" stroke="#26426f"/><path d="M10 1h7v2h-7z" fill="#26426f"/>',
      ajustes: '<path d="M2 1h14v16H2z" fill="#f6e9c0" stroke="#444"/><path d="M2 1h14v3H2z" fill="#7d88a8"/><circle cx="9" cy="10" r="3.500" fill="#dfe9ff" stroke="#26426f" stroke-width="2.500"/>',
      engranajes: '<circle cx="5" cy="10" r="3.500" fill="#dfe9ff" stroke="#3c62b0" stroke-width="2.500" stroke-dasharray="2 1"/><circle cx="13" cy="5" r="3" fill="#dfe9ff" stroke="#3c62b0" stroke-width="2.500" stroke-dasharray="2 1"/><circle cx="12" cy="13" r="2.500" fill="#dfe9ff" stroke="#3c62b0" stroke-width="2" stroke-dasharray="2 1"/>',
      exp1: '<path d="M4 1h13v11H4z" fill="#0f4a86" stroke="#123"/><path d="M7 3l3 5 2-4 3 5" stroke="#9cf" fill="none"/><path d="M1 11h8l-4 6z" fill="#e22" stroke="#811" stroke-width=".6"/>',
      exp2: '<path d="M4 1h13v11H4z" fill="#0f4a86" stroke="#123"/><path d="M7 3l3 5 2-4 3 5" stroke="#9cf" fill="none"/><path d="M1 17h8l-4-7z" fill="#f66" stroke="#811" stroke-width=".6"/>',
      exp3: '<path d="M8 4h9v11H8z" fill="#fff" stroke="#888"/><path d="M7 1l7 9-8 2z" fill="#c11" stroke="#600"/><path d="M1 11h8l-4 6z" fill="#f44" stroke="#811" stroke-width=".6"/>',
      exp4: '<path d="M7 4h10v11H7z" fill="#fff" stroke="#888"/><path d="M6 1l7 9-8 2z" fill="#c11" stroke="#600"/><path d="M1 17h7l-3-6z" fill="#f66" stroke="#811" stroke-width=".6"/>',
      nudo: star + red(9, 8),
      linea: star + '<path d="M3 16L15 3" stroke="#222" stroke-width="1.500"/><path d="M1 15h3v3H1zM15 1h3v3h-3z" fill="#e00"/>',
      lineaEd: star + '<path d="M3 16L15 3M8 4l6 12" stroke="#6a86b4" stroke-width="1.500"/>' + cursor + '<path d="M1 15h3v3H1z" fill="#e00"/>',
      arco: star + '<path d="M7 3h8v7l-7 6" fill="none" stroke="#b02020" stroke-width="1.500"/><path d="M13 1h4v4h-4zM7 14h3v3H7zM5 9h3v3H5z" fill="#e00"/>',
      apoyo: star + '<path d="M10 5q-1 6-5 9h11q-4-3-4-9z" fill="#159a3a" stroke="#064"/><ellipse cx="11" cy="14" rx="6" ry="2.500" fill="#27b54e" stroke="#064" stroke-width=".5"/>' + red(10, 0),
      apoyoLinea: star + '<path d="M4 8h12" stroke="#222" stroke-width="1.500"/><path d="M4 11l-3 6h6zM14 11l-3 6h6z" fill="#159a3a"/>' + red(2, 6) + red(13, 6),
      superficie: star + '<path d="M2 10v3l7 4 8-6V8l-8 6z" fill="#9cc4e8" stroke="#468" stroke-width=".6"/><path d="M2 10l8-5 7 3-8 6z" fill="#a8dccb" stroke="#387" stroke-width=".6"/>',
      cota: star + '<path d="M2 8v9M16 8v9M2 12h14M9 2l5 6M14 2L9 8" stroke="#222" stroke-width="1.300"/><path d="M2 12l4-2v4zM16 12l-4-2v4z" fill="#222"/>',
      cotaXX: star + '<path d="M9 1l3 5M12 1L9 6M14 1l3 5M17 1l-3 5M2 17l5-8h10" stroke="#222" stroke-width="1.200" fill="none"/>',
      rejilla: star + '<path d="M3 4h14M3 14h14M5 2v15M14 2v15" stroke="#333" stroke-dasharray="2 1"/>',
      placa: star + '<path d="M3 7h7l1 3h5v6H3z" fill="#6ba5e8" stroke="#21508c"/>' + red(13, 14),
      abertura: star + '<path d="M3 3h13v13H3z" fill="#7fb0ee" stroke="#21508c"/><path d="M7 7h6v6H7z" fill="#fff" stroke="#111"/><path d="M6 6h3v3H6zM11 6h3v3h-3zM6 11h3v3H6zM11 11h3v3h-3z" fill="#d22"/>' + star,
      curva: '<path d="M2 8q6-6 11-2l4 6-7 5q0-6-8-9z" fill="#5f9be4" stroke="#163f74"/>' + star,
      solido: '<path d="M4 4l3-3h10v8l-3 7H8l-4-4z" fill="#b3bfd4" stroke="#6a7890"/><path d="M4 4h10v12M14 4l3-3" fill="none" stroke="#6a7890"/>',
      solidos: '<path d="M3 8h10v9H3z" fill="#6ba5e8" stroke="#21508c"/><path d="M8 4l3-3h6v6l-3 3H8z" fill="#dfe9f8" stroke="#333"/><path d="M8 4h6v6M14 4l3-3" stroke="#333" fill="none"/>' + star,
      conexion: '<path d="M1 2h6v4H1zM1 12h6v4H1zM7 4q5 0 6 4M7 14q5 0 6-4" fill="none" stroke="#222" stroke-width="1.200"/><circle cx="14" cy="9" r="3" fill="#4a9ae8"/>',
      cargaNudo: star + '<path d="M12 3v8" stroke="#2350c0" stroke-width="2.500"/><path d="M9 9h6l-3 5z" fill="#2350c0"/><path d="M10 14h4v4h-4z" fill="#e00"/>',
      cargaBarra: loads + star,
      cargaLinea: loads + star,
      cargaSup: '<g opacity=".5">' + loads + '</g>' + star,
      cargaGen: '<path d="M2 10l12-3 2 6-13 4z" fill="#7fc0ee" stroke="#358"/>' + win + star,
      manoZoom: '<path d="M5 6l5-3 6 4v7l-4 3H8z" fill="#8a6c50" stroke="#332"/><path d="M1 2l6 7M4 1l4 6M8 1l2 4M13 3v5M11 5h5" stroke="#332" stroke-width="1.500"/>',
      zoomVent: lens + '<path d="M5 3h11v9" stroke="#e00" fill="none" stroke-dasharray="2 1"/>',
      zoomX: lens + '<path d="M8 1l8 8M16 1L8 9" stroke="#d00" stroke-width="2"/>',
      cubo: '<path d="M2 5l4-4h11v11l-4 5H2z" fill="#dbe7f8" stroke="#31569c"/><path d="M2 5h11v12M13 5l4-4M6 1v11h11M6 12l-4 5" stroke="#31569c" stroke-width=".8" fill="none"/>',
      cubos: '<path d="M7 3l2-2h8v8l-2 2H7z" fill="#d9dfee" stroke="#85714e"/><path d="M7 3h8v8M15 3l2-2" stroke="#85714e"/><path d="M1 10l2-2h8v7l-2 2H1z" fill="#f5cf88" stroke="#6b5a3e"/><path d="M1 10h8v7M9 10l2-2" stroke="#6b5a3e"/>',
      vistaX: axis('#19b040', '#2460e0', tX),
      vistaY: '<g transform="matrix(-1 0 0 1 18 0)">' + axis('#e02020', '#2460e0', '') + '</g><path d="M3 9l3 4 3-4M6 13v4" fill="none" stroke="#222" stroke-width="1.500"/>',
      vistaZ: axis('#e02020', '#19b040', tZ),
      vistaMY: axis('#19b040', '#2460e0', tY) + red(5, 1),
      microscopio: '<path d="M5 17h12l-2-3H8z" fill="#222"/><path d="M12 3l4 1-4 10-3-2z" fill="#555" stroke="#111"/><path d="M1 1h7v7H1z" fill="#fff04a" stroke="#222"/>',
      corte: '<path d="M2 6l6-4 8 2v9l-6 4-8-3z" fill="#f2f3f6" stroke="#99a"/><path d="M6 13l7-9" stroke="#222" stroke-width="1.500"/><path d="M12 2h3v3h-3z" fill="#e00"/>',
      portico: '<path d="M2 16L5 4l10-2 1 13" fill="none" stroke="#222" stroke-width="1.500"/><path d="M3 16Q3 8 6 6q6-3 8 1l1 8" fill="none" stroke="#d00"/>',
      gris: '<path d="M1 6h9v6H1zM6 8h10v7H6z" fill="#c9ccd4" stroke="#989ca8"/>',
      barra: '<path d="M5.500 1h7M5.500 8h7M9 1v7" stroke="#2a3c78" stroke-width="1.800"/><path d="M1 12h16" stroke="#555" stroke-width="2"/><path d="M0 17.500V13h8z" fill="#2222e0"/><path d="M18 11.500V7.500l-7 4z" fill="#e11"/>',
      tensiones: '<path d="M1 8l7-5 9 5-6 3-3 4z" fill="#f6a55a"/><path d="M2 8l6-3 6 4-6 5z" fill="#7ee06a"/><path d="M4 9l4-1 3 3-4 3z" fill="#4aa0f0"/><path d="M1 8l7-5 9 5-6 3-3 4z" stroke="#88a" stroke-width=".6"/>',
      solidoRes: '<path d="M2 4l5-3 9 2v11l-4 3-9-2z" fill="#7bcf9a" stroke="#357"/><circle cx="8" cy="10" r="4" fill="#ffe84a"/><circle cx="8" cy="10" r="2" fill="#f64a2a"/>',
      reacciones: '<ellipse cx="6" cy="7" rx="6" ry="2" fill="#1f6a3a"/><path d="M4 1h4q0 4 3 6H1q3-2 3-6z" fill="#2c8a4a"/><path d="M18 3h-4V1l-4 3 4 3V5.500h4z" fill="#0c0" stroke="#060" stroke-width=".5"/><path d="M5 17v-4H3l3-4 3 4H7.500v4z" fill="#0c0" stroke="#060" stroke-width=".5"/>',
      secciones: '<path d="M2 14L15 2q2 3-4 9z" fill="#d6dbe8" stroke="#7a8296"/><path d="M1 16h9" stroke="#3564c4" stroke-width="2"/><path d="M17 15v-3l-7 3z" fill="#d55"/>',
      valor: '<path d="M10 1h7v5h-7z" fill="#fff04a" stroke="#654"/><path d="M2 3l6 6M8 3L2 9" stroke="#d11" stroke-width="1.500"/><path d="M5 7l5 4H8l2 5-2 1-2-5-2 2z" fill="#fff" stroke="#222"/>',
      perfil: '<path d="M5 1h8M5 9h8M9 1v8" stroke="#4a64a8" stroke-width="1.500"/><path d="M1 14h16" stroke="#6a7cc0"/><path d="M1 14q3 5 7 0 4-5 8 0z" fill="#f5c8d0" stroke="#c44"/>',
      cuadros: '<path d="M1 1h7v7H1zM10 1h7v7h-7zM1 10h7v7H1zM10 10h7v7h-7z" fill="#fff" stroke="#333a66" stroke-width="1.500"/><path d="M1 4.500h16M1 13.500h16" stroke="#333a66"/><path d="M3 3h4M12 12h4" stroke="#d33"/>',
      panel: '<path d="M3 1h10l2 2v14H3z" fill="#fff" stroke="#222"/><path d="M5 4h8M8 7h5M8 10h5M8 13h5" stroke="#222" stroke-width="1.500"/><path d="M4 6h3v2H4z" fill="#f00"/><path d="M4 9h3v2H4z" fill="#0c0"/><path d="M4 12h3v3H4z" fill="#00f"/>',
      varita: star + '<path d="M7 16L16 5" stroke="#b8c8ea" stroke-width="3"/><path d="M10 3l6 11" stroke="#333" stroke-width="1.500"/><path d="M12 1h4v3h-4z" fill="#e00"/>',
      colores: '<path d="M1 1h15v16H1z" fill="#fff" stroke="#222"/><path d="M1 1l15 16h-4L1 5z" fill="#f00"/><path d="M1 5l11 12H8L1 9z" fill="#fd0"/><path d="M1 9l7 8H4l-3-4z" fill="#0b0"/><path d="M1 13l3 4H1z" fill="#00f"/><path d="M9 8l7-7" stroke="#d8a018" stroke-width="3"/>',
      hojaVerde: sheet + '<path d="M4 15L15 4v11z" fill="#7ee07a" stroke="#182"/>',
      hojaCol: sheet + '<path d="M8 7v9M5 12h6M13 4v7M10 8h6" stroke="#1c3fb8" stroke-width="1.500"/>',
      hojaFlecha: sheet + '<path d="M10 3v9" stroke="#1c3fb8" stroke-width="3"/><path d="M6 11h8l-4 5z" fill="#1c3fb8"/>',
      hojaBarra: sheet + '<path d="M1 11h16" stroke="#333" stroke-width="1.500"/><path d="M1 16v-4h8z" fill="#22d"/><path d="M17 10V4L8 10z" fill="#e11"/>',
      hojaOnda: '<g opacity=".5">' + sheet + '<path d="M1 10l3-4 3 8 3-8 3 8 3-5" stroke="#e00" stroke-width="2" fill="none"/></g>',
      hojaIzq: sheet + '<path d="M15 7H9V4l-7 5 7 5v-3h6z" fill="#4a78e0" stroke="#14337c"/>',
      hojaDer: sheet + '<path d="M3 7h6V4l7 5-7 5v-3H3z" fill="#4a78e0" stroke="#14337c"/>',
      clip1: '<path d="M3 3q9-2 10 4 0 6-6 10l-1-2q5-4 3-7-1-2-4-1l1 2-4-3z" fill="#6a7ca8" stroke="#223"/>',
      clip2: '<path d="M15 2Q8 2 7 7q-1 4 4 6v3l5-4-5-4v2q-2-1-1-3 1-2 5-3z" fill="#6a7ca8" stroke="#223"/>',
      rejillaAzul: '<path d="M1 2h16v14H1z" fill="#c5cdf0" stroke="#5a68b0"/><path d="M1 2h16v3H1z" fill="#5a68b0"/><path d="M1 9h16M1 12h16M6 2v14M11 2v14" stroke="#5a68b0"/>',
      rejillaNota: '<g opacity=".6">' + sheet + '</g><path d="M7 16l6-4 2-8 2 12z" fill="#f4ee7a" stroke="#998"/>',
      filtro: '<path d="M1 7h13l-5 5v5l-3-2v-3z" fill="#3c6cc8" stroke="#136"/>' + win,
      infoGris: '<path d="M1 10l7-2 4 4-7 5z" fill="#e8b8b8" stroke="#a88"/><circle cx="12" cy="6" r="5" fill="#8f9cc0"/><path d="M12 3v1.500M12 6v4" stroke="#fff" stroke-width="2"/>',
      barras: '<path d="M3 1v16M3 3h4v3H3M3 8h8v3H3M3 13h12v3H3" fill="#fbd5d5" stroke="#888"/>',
      excel: '<path d="M2 1h14v16H2z" fill="#fff" stroke="#1d7a3a" stroke-width="1.500"/><path d="M5 5l7 8M12 5l-7 8" stroke="#1d8a3a" stroke-width="3"/>',
      calculadora: '<path d="M2 3h14v13H2z" fill="#666" stroke="#222"/><path d="M4 5h10v3H4z" fill="#dfe6dc"/><path d="M4 10h10M4 12.500h10M4 15h10" stroke="#fff" stroke-width="1.500" stroke-dasharray="2 1"/>',
      marco: '<path d="M3 15Q-1 4 4 3h10q5 1 1 12" fill="none" stroke="#222" stroke-width="1.300"/><path d="M5 15V5h8v10" fill="none" stroke="#555"/><path d="M2 5l3-2M16 5l-3-2" stroke="#e00" stroke-width="2"/>'
    };

    const svg = (n) => `<svg class="w-[18px] h-[18px]" viewBox="0 0 18 18" fill="none">${icons[n]}</svg>`;

    // '|' separator, '_' spacer, 'v' drop-down arrow, '*' prefix = pressed, '#' = load case combo
    function toolbar(id, groups) {
      document.getElementById(id).innerHTML = groups.map(g => `
        <div class="flex items-center pr-0.5 rounded-r bg-linear-to-b from-[#f1f4f9] to-[#d9dee8] border-b border-[#b4bac6]">
          <span class="w-[3px] ml-1 mr-0.5 h-4 border-l-2 border-dotted border-[#a9afbb]"></span>
          ${g.split(' ').map(n => {
            if (n === '|') return '<span class="w-0.5 mx-[3px] h-[18px] border-l border-[#aab0bd] border-r border-r-white"></span>';
            if (n === '_') return '<span class="w-[3px]"></span>';
            if (n === 'v') return '<button class="w-[13px] flex justify-center" aria-label="Más"><svg class="w-[7px] h-1" viewBox="0 0 7 4"><path d="M0 0h7L3.500 4z" fill="#555"/></svg></button>';
            if (n === '#') return `<select aria-label="Caso de carga" class="appearance-none h-5 mx-0.5 pl-1 bg-white font-['Liberation_Sans',sans-serif] ${id === 'toolbar1' ? 'w-[216px]' : 'w-[132px]'}"><option>CO1 - ULS</option></select><svg class="w-[7px] h-1 -ml-3 mr-[7px] pointer-events-none" viewBox="0 0 7 4"><path d="M0 0h7L3.500 4z" fill="#777"/></svg>`;
            if (n[0] === '*') return `<button class="w-[22px] h-[22px] flex items-center justify-center bg-linear-to-b from-[#fbd9a0] to-[#fbc468] border border-[#c2a476] rounded-xs" aria-label="${n.slice(1)}">${svg(n.slice(1))}</button>`;
            return `<button class="w-[22px] h-[22px] flex items-center justify-center" aria-label="${n}">${svg(n)}</button>`;
          }).join('')}
        </div>`).join('');
    }

    toolbar('toolbar1', [
      'nuevo abrir cajaMarron cajaAzul guardar portapapeles imprimir vista | deshacer rehacer | selPlano selCirculo selAnillo selEspecial selVentana | *lista *tabla | nuevaCarga # atras adelante ojoCarga xxxGris *ojo *xxx | gafas abacoVentana abaco',
      'mano snap plano1 plano2 *plano3 malla ejes | mover rotar espejo cruz info ajustes engranajes',
      'exp1 exp2 exp3 exp4'
    ]);
    toolbar('toolbar2', [
      'nudo v linea lineaEd v arco v | apoyo apoyoLinea superficie | _ cota v cotaXX rejilla | placa v abertura v curva v solido solidos v | conexion v cargaNudo cargaBarra cargaLinea cargaSup cargaGen v',
      'manoZoom zoomVent zoomX cubo *cubos | vistaX vistaY vistaZ vistaMY v microscopio v | corte v',
      'portico gris | *barra tensiones solidoRes reacciones secciones valor v perfil cuadros | *panel varita v colores v'
    ]);
    toolbar('toolbar3', [
      'hojaVerde hojaCol hojaFlecha *hojaBarra hojaOnda | hojaIzq hojaDer | *clip1 *clip2 | rejillaAzul rejillaNota | # | atras adelante | filtro | infoGris | barras | excel | calculadora'
    ]);

    // [guides, expander, control, icon, label, subscript]; guides: '|' line, ' ' gap, 'T' branch, 'L' last branch
    const tree = [
      ['T', '+', 'off', 'marco', 'Deformaciones globales'],
      ['T', '-', 'on', 'barra', 'Barras'],
      ['|T', '+', 'mix', 'barra', 'Deformaciones locales'],
      ['|T', '+', 'mix', 'barra', 'Esfuerzos internos'],
      ['|T', '-', 'mix', 'barra', 'Tensiones'],
      ['||T', '', 'sel', 'barra', 'σ', 'x'],
      ['||T', '', 'radio', 'barra', 'τ', 'y'],
      ['||T', '', 'radio', 'barra', 'τ', 'z'],
      ['||T', '-', 'mix', 'barra', 'Componentes de tensión elásticos'],
      ['|||T', '', 'radio', 'barra', 'σ', 'N'],
      ['|||T', '', 'radio', 'barra', 'σ', 'My'],
      ['|||T', '', 'radio', 'barra', 'σ', 'Mz'],
      ['|||T', '', 'radio', 'barra', 'σ', 'N+My'],
      ['|||T', '', 'radio', 'barra', 'σ', 'N+Mz'],
      ['|||L', '', 'radio', 'barra', 'σ', 'M'],
      ['||L', '-', 'mix', 'barra', 'Tensiones equivalentes elásticas'],
      ['|| T', '', 'radio', 'barra', 'σ', 'eqv,Mises'],
      ['|| T', '', 'radio', 'barra', 'σ', 'eqv,Tresca'],
      ['|| T', '', 'radio', 'barra', 'σ', 'eqv,Rankine'],
      ['|| T', '', 'radio', 'barra', 'σ', 'eqv,Tresca+Rankine'],
      ['|| L', '', 'radio', 'barra', 'σ', 'eqv,Bach'],
      ['|L', '-', 'mix', 'barra', 'Deformaciones'],
      ['| T', '', 'radio', 'barra', 'ε', 'x'],
      ['| T', '', 'radio', 'barra', 'γ', 'xz'],
      ['| L', '', 'radio', 'barra', 'κ', 'y'],
      ['T', '+', 'off', 'marco', 'Criterio'],
      ['T', '+', 'off', 'reacciones', 'Reacciones en apoyos'],
      ['L', '+', 'off', 'marco', 'Distribución de carga']
    ];

    const controls = {
      off: id => `<input id="${id}" type="checkbox" class="appearance-none w-[13px] h-[13px] border border-[#555] bg-linear-to-br from-[#dfe1e6] to-white">`,
      on: id => `<span class="relative flex"><input id="${id}" type="checkbox" checked class="appearance-none w-[13px] h-[13px] border border-[#555] bg-white"><svg class="absolute inset-0 w-[13px] h-[13px] pointer-events-none" viewBox="0 0 13 13"><path d="M3 6l2.500 3L10 4" fill="none" stroke="#000" stroke-width="2"/></svg></span>`,
      mix: id => `<input id="${id}" type="checkbox" class="appearance-none w-[13px] h-[13px] border border-[#555] bg-[#999] shadow-[inset_0_0_0_2px_#eceded]">`,
      radio: id => `<input id="${id}" type="radio" name="resultado" class="appearance-none w-[13px] h-[13px] rounded-full border border-[#555] bg-linear-to-br from-[#dfe1e6] to-white">`,
      sel: id => `<input id="${id}" type="radio" name="resultado" checked class="appearance-none w-[13px] h-[13px] rounded-full border border-[#444] bg-black shadow-[inset_0_0_0_3px_#fff]">`
    };

    document.getElementById('tree').innerHTML = tree.map((r, i) => {
      const [guides, exp, ctl, icon, label, sub] = r;
      const cells = [...guides].map(c => {
        const v = c === ' ' ? '' : `<span class="absolute left-[9px] ${i === 0 ? 'top-1/2 bottom-0' : c === 'L' ? 'top-0 bottom-1/2' : 'top-0 bottom-0'} border-l border-dotted border-[#888]"></span>`;
        const h = c === 'T' || c === 'L' ? '<span class="absolute left-[9px] right-[-3px] top-1/2 border-t border-dotted border-[#888]"></span>' : '';
        const b = h && exp ? `<button class="absolute left-[5px] top-[5px] w-[9px] h-[9px] bg-white border border-[#8a8f98] flex items-center justify-center" aria-label="Expandir"><svg class="w-[5px] h-[5px]" viewBox="0 0 5 5"><path d="M0 2.500h5${exp === '+' ? 'M2.500 0v5' : ''}" stroke="#23449c"/></svg></button>` : '';
        return `<span class="relative w-[19px] h-full shrink-0">${v}${h}${b}</span>`;
      }).join('');
      const text = sub ? `<span>${label}<sub class="static align-baseline text-[10px]">${sub}</sub></span>` : label;
      return `<li class="h-[18px] flex items-center pl-1">${cells}
        <span class="ml-[3px] mr-0.5 flex">${controls[ctl]('n' + i)}</span>
        <svg class="w-4 h-4 shrink-0 mr-[3px]" viewBox="0 0 18 18" fill="none">${icons[icon]}</svg>
        <label for="n${i}" class="whitespace-nowrap px-0.5 ${sub ? 'pt-0.5' : ''} ${i === 0 ? 'bg-[#0078d7] text-white outline outline-dotted outline-[#e08a2a]' : ''}">${text}</label></li>`;
    }).join('');

    const colours = ['#b80000', '#ff0000', '#ffa500', '#cccc00', '#ffff00', '#00ff00', '#00e68a', '#00f4f4', '#0099ff', '#0000ff', '#0000a0'];
    document.getElementById('legendColours').innerHTML = colours.map((c, i) => `
      <div class="relative h-[17px] border-b border-black" style="background:${c}">
        ${i === 0 ? '<span class="absolute left-full -top-px w-[7px] border-t border-black"></span>' : ''}
        <span class="absolute left-full -bottom-px w-[7px] border-t border-black"></span>
      </div>`).join('');
    document.getElementById('legendValues').innerHTML =
      ['0.58', '0.47', '0.35', '0.23', '0.11', '-0.01', '-0.12', '-0.24', '-0.36', '-0.48', '-0.60', '-0.71']
        .map(v => `<p class="leading-[17px]">${v}</p>`).join('');

    const rows = [
      ['Carga total en dirección X', '0.00', 'kN', ''],
      ['Suma de esfuerzos en apoyos en X', '0.00', 'kN', ''],
      ['Carga total en dirección Z', '433.31', 'kN', ''],
      ['Suma de esfuerzos en apoyos en Z', '433.31', 'kN', 'Desviación:  0.00 %'],
      ['Resultante de reacciones respecto a X', '0.000', 'kNm', 'En el centro de gravedad del modelo (X: 12.120, Y: 0.000, Z: 10.746 m)'],
      ['Resultante de reacciones respecto a Y', '-0.958', 'kNm', 'En el centro de gravedad del modelo'],
      ['Resultante de reacciones respecto a Z', '0.000', 'kNm', 'En el centro de gravedad del modelo'],
      ['Máximo desplazamiento en dirección X', '4.4', 'mm', 'Barra núm. 36,  x: 0.000 m'],
      ['Máximo desplazamiento en dirección Z', '27.5', 'mm', 'Barra núm. 35,  x: 2.535 m'],
      ['Máximo desplazamiento vectorial', '27.6', 'mm', 'Barra núm. 35,  x: 2.535 m'],
      ['Máximo giro respecto al eje Y', '-5.6', 'mrad', 'Barra núm. 33,  x: 0.000 m'],
      ['Método de análisis', 'Lineal', '', 'Análisis geométricamente lineal'],
      ['Reducción de rigidez', 'check', '', 'Modificación especial de rigideces'],
      ['Número de incrementos de carga', '1', '', '']
    ];
    document.getElementById('rows').innerHTML = rows.map((r, i) => `
      <tr class="h-4 ${i < 2 || (i > 6 && i < 11) ? 'bg-[#f8f9ff]' : 'bg-white'}">
        <td class="border border-[#7a7a7a] bg-[#e0e0e0]"></td>
        <td class="border border-[#a0a0a0] p-0"><span class="flex items-center pl-2"><span class="w-3 mr-1.5 border-t border-[#ccc]"></span>${r[0]}</span></td>
        <td class="border border-[#a0a0a0] p-0 pr-1 text-right">${r[1] === 'check' ? '<span class="relative flex justify-end"><input type="checkbox" checked aria-label="Reducción de rigidez" class="appearance-none w-3 h-3 border border-[#777] bg-white"><svg class="absolute right-0 top-0 w-3 h-3 pointer-events-none" viewBox="0 0 12 12"><path d="M3 6l2 3 4-6" fill="none" stroke="#333" stroke-width="1.500"/></svg></span>' : r[1]}</td>
        <td class="border border-[#a0a0a0] p-0 pl-[3px]">${r[2]}</td>
        <td class="border border-[#a0a0a0] p-0 pl-1 whitespace-pre">${r[3]}</td>
        <td class="border-b border-[#a0a0a0] bg-[#f0f0f0]"></td>
      </tr>`).join('');

    document.getElementById('tabs').innerHTML =
      ['Resultados - Resumen', 'Nudos - Esfuerzos en apoyos', 'Nudos - Deformaciones', 'Barras - Deformaciones locales', 'Barras - Deformaciones globales', 'Barras - Esfuerzos internos', 'Barras - Deformaciones', 'Barras - Coeficientes para pandeo', 'Esbelteces de barras', 'Secciones - Esfuerzos internos']
        .map((t, i) => `<button class="px-0.5 whitespace-nowrap border-r border-b rounded-b-xs border-[#555] ${i === 0 ? '' : 'bg-[#e4e4e4] border-t-2 border-t-[#8a8a8a]'}">${t}</button>`).join('');
  </script>
</body>
</html>
